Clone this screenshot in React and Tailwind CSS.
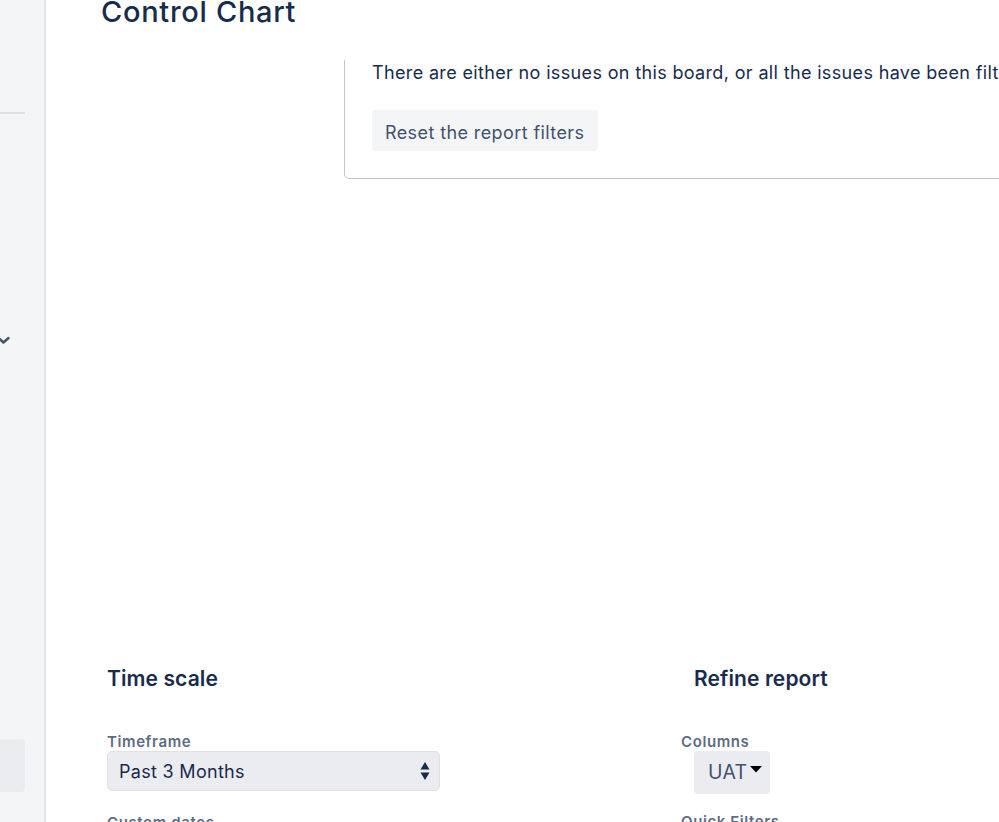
const font = { fontFamily: "Inter, 'Noto Sans', sans-serif" };

const Sidebar = () => (
  <aside className="w-[46px] shrink-0 h-full bg-[#f4f5f7] border-r-2 border-[#e2e4e8] flex flex-col">
    <div className="mt-[112px] h-[2px] w-[25px] bg-[#dfe1e6]" />
    <div className="mt-[221px] -ml-[3px] text-[#42526e]">
      <svg width="14" height="10" viewBox="0 0 14 10" fill="none">
        <path d="M1.5 3l5 4.5L11.5 3" stroke="currentColor" strokeWidth="2.4" strokeLinecap="round" strokeLinejoin="round" />
      </svg>
    </div>
    <div className="mt-[394px] h-[53px] w-[25px] bg-[#ebecf0] rounded-r-[4px]" />
  </aside>
);

const SelectArrows = () => (
  <svg width="10" height="20" viewBox="0 0 10 20" className="text-[#172b4d]">
    <path d="M5 1L9.5 8.5H0.5z" fill="currentColor" />
    <path d="M5 19L9.5 11.5H0.5z" fill="currentColor" />
  </svg>
);

export default function App() {
  return (
    <div className="w-[999px] h-[822px] overflow-hidden flex bg-white" style={font}>
      <Sidebar />
      <main className="flex-1 min-w-0 overflow-hidden">
        <h1 className="pl-[55px] -mt-[5px] text-[29px] leading-[33px] font-medium text-[#172b4d] tracking-[0.7px]">
          Control Chart
        </h1>

        {/* Empty-state card */}
        <div className="ml-[298px] mt-[32px] w-[760px] border-l border-b border-[#c1c7d0] rounded-bl-[5px] pl-[27px] pb-[27px]">
          <p className="text-[18px] leading-[26px] text-[#172b4d] whitespace-nowrap tracking-[0.35px]">
            There are either no issues on this board, or all the issues have been filtered out.
          </p>
          <button className="mt-[24px] h-[41px] w-[226px] rounded-[3px] bg-[#f4f5f7] text-[18px] tracking-[0.4px] text-[#42526e] text-left pl-[13px] pt-[3px]">
            Reset the report filters
          </button>
        </div>

        {/* Report options */}
        <div className="mt-[486px] pl-[61px] flex">
          <section className="w-[574px] shrink-0">
            <h2 className="text-[21px] leading-[28px] font-semibold text-[#172b4d] tracking-[0.1px]">Time scale</h2>
            <div className="mt-[40px] text-[15px] leading-[18px] font-semibold text-[#5e6c84] tracking-[0.6px]">Timeframe</div>
            <div className="h-[40px] w-[333px] rounded-[5px] bg-[#ebecf0] border border-[#dfe1e6] flex items-center justify-between pl-[11px] pr-[9px]">
              <span className="text-[18px] text-[#172b4d] tracking-[0.3px]">Past 3 Months</span>
              <SelectArrows />
            </div>
            <div className="mt-[23px] text-[15px] leading-[18px] font-semibold text-[#5e6c84] tracking-[0.6px]">Custom dates</div>
          </section>
          <section>
            <h2 className="pl-[13px] text-[21px] leading-[28px] font-semibold text-[#172b4d] tracking-[0.1px]">Refine report</h2>
            <div className="mt-[40px] text-[15px] leading-[18px] font-semibold text-[#5e6c84] tracking-[0.6px]">Columns</div>
            <button className="ml-[13px] h-[43px] w-[76px] rounded-[4px] bg-[#ebecf0] flex items-center pl-[14px] gap-[3px]">
              <span className="text-[19.5px] text-[#42526e] tracking-[0.3px]">UAT</span>
              <svg width="12" height="7" viewBox="0 0 12 7" className="-mt-[6px]">
                <path d="M0 0h12L6 6.5z" fill="#000" />
              </svg>
            </button>
            <div className="mt-[19px] text-[15px] leading-[18px] font-semibold text-[#5e6c84] tracking-[0.6px]">Quick Filters</div>
          </section>
        </div>
      </main>
    </div>
  );
}
